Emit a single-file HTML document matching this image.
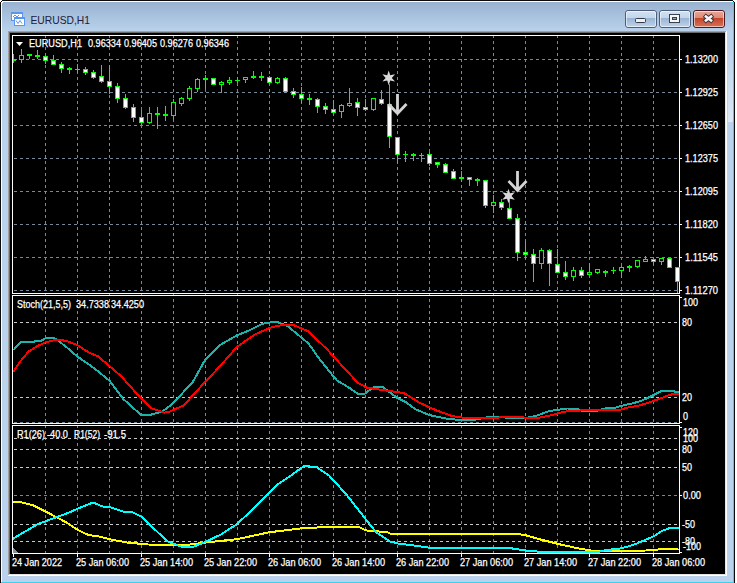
<!DOCTYPE html><html><head><meta charset="utf-8"><style>html,body{margin:0;padding:0;background:#f0f0f0;overflow:hidden;width:737px;height:583px}svg{display:block}text{font-family:"Liberation Sans",sans-serif}</style></head><body>
<svg width="737" height="583" viewBox="0 0 737 583">
<defs><linearGradient id="tg" x1="0" y1="0" x2="0" y2="1"><stop offset="0" stop-color="#98b2d0"/><stop offset="1" stop-color="#bad2eb"/></linearGradient><linearGradient id="rg" x1="0" y1="0" x2="0" y2="1"><stop offset="0" stop-color="#ffffff" stop-opacity="0"/><stop offset="1" stop-color="#ffffff" stop-opacity="0.5"/></linearGradient><linearGradient id="bg1" x1="0" y1="0" x2="0" y2="1"><stop offset="0" stop-color="#d4e2f2"/><stop offset="0.42" stop-color="#c3d6ec"/><stop offset="0.45" stop-color="#9ab3d1"/><stop offset="1" stop-color="#c0d6ee"/></linearGradient><linearGradient id="bg2" x1="0" y1="0" x2="0" y2="1"><stop offset="0" stop-color="#eaa898"/><stop offset="0.42" stop-color="#de8c78"/><stop offset="0.45" stop-color="#c0452a"/><stop offset="1" stop-color="#d8755c"/></linearGradient></defs>
<g shape-rendering="crispEdges">
<rect x="0" y="0" width="737" height="583" fill="#ffffff"/>
<rect x="0" y="0" width="735" height="583" fill="#0c0c0c"/>
<rect x="1" y="1" width="733" height="582" fill="#ffffff"/>
<rect x="2" y="2" width="731" height="580" fill="#bad2eb"/>
<rect x="733" y="2" width="1" height="581" fill="#3ad2ee"/>
<rect x="1" y="582" width="733" height="1" fill="#3ad2ee"/>
<rect x="2" y="2" width="731" height="29" fill="url(#tg)"/>
<rect x="8" y="31" width="719" height="545" fill="#ffffff"/>
<rect x="8" y="31" width="718" height="544" fill="#a0a0a0"/>
<rect x="9" y="32" width="717" height="543" fill="#e3e3e3"/>
<rect x="9" y="32" width="716" height="542" fill="#696969"/>
<rect x="10" y="33" width="715" height="541" fill="#000000"/>
</g>
<rect x="728" y="45" width="5" height="77" fill="url(#rg)" shape-rendering="crispEdges"/>
<g shape-rendering="crispEdges"><rect x="0" y="0" width="2" height="1" fill="#ffffff"/><rect x="0" y="1" width="1" height="1" fill="#ffffff"/><rect x="1" y="1" width="1" height="1" fill="#0c0c0c"/><rect x="2" y="2" width="1" height="1" fill="#ffffff"/><rect x="733" y="0" width="2" height="1" fill="#ffffff"/><rect x="734" y="1" width="1" height="1" fill="#ffffff"/><rect x="733" y="1" width="1" height="1" fill="#0c0c0c"/><rect x="732" y="2" width="1" height="1" fill="#3ad2ee"/></g>
<g shape-rendering="crispEdges"><rect x="11" y="12" width="12" height="9" fill="#5896f2"/><rect x="12" y="14" width="10" height="6" fill="#ffffff"/><rect x="14" y="17" width="11" height="9" fill="#5896f2"/><rect x="15" y="19" width="9" height="6" fill="#ffffff"/></g><polyline points="13,17 15,15 17,17 19,15" fill="none" stroke="#5896f2" stroke-width="1"/><polyline points="16,20.5 18,23.5 20,20.5 22,23.5" fill="none" stroke="#5896f2" stroke-width="1"/>
<text x="30.5" y="24" font-size="11.5" fill="#20203a" textLength="59.5" lengthAdjust="spacingAndGlyphs">EURUSD,H1</text>
<rect x="625.5" y="10.5" width="31" height="17" rx="2.5" fill="url(#bg1)" stroke="#4f5e78" stroke-width="1"/><rect x="626.5" y="11.5" width="29" height="15" rx="1.5" fill="none" stroke="rgba(255,255,255,0.55)" stroke-width="1"/>
<rect x="659.5" y="10.5" width="31" height="17" rx="2.5" fill="url(#bg1)" stroke="#4f5e78" stroke-width="1"/><rect x="660.5" y="11.5" width="29" height="15" rx="1.5" fill="none" stroke="rgba(255,255,255,0.55)" stroke-width="1"/>
<rect x="693.5" y="10.5" width="31" height="17" rx="2.5" fill="url(#bg2)" stroke="#4a1a24" stroke-width="1"/><rect x="694.5" y="11.5" width="29" height="15" rx="1.5" fill="none" stroke="rgba(255,255,255,0.55)" stroke-width="1"/>
<rect x="635.5" y="18.5" width="10" height="4" rx="1" fill="#f0f0f0" stroke="#333a48" stroke-width="1"/>
<g shape-rendering="crispEdges"><rect x="669" y="14" width="11" height="9" fill="#3a4250"/><rect x="670" y="15" width="9" height="7" fill="#f6f6f6"/><rect x="672" y="17" width="5" height="3" fill="#3a4250"/><rect x="673" y="18" width="3" height="1" fill="#8fa8c8"/></g>
<path d="M704.2 15.2 L712.8 21.8 M712.8 15.2 L704.2 21.8" stroke="#3a3440" stroke-width="4.6" stroke-linecap="butt"/>
<path d="M704.9 15.8 L712.1 21.2 M712.1 15.8 L704.9 21.2" stroke="#f8f8f8" stroke-width="2.6" stroke-linecap="butt"/>
<g stroke-width="1" stroke-dasharray="3 3" fill="none" shape-rendering="crispEdges"><line x1="45.5" y1="35" x2="45.5" y2="553" stroke="#778899"/><line x1="77.5" y1="35" x2="77.5" y2="553" stroke="#778899"/><line x1="109.5" y1="35" x2="109.5" y2="553" stroke="#778899"/><line x1="141.5" y1="35" x2="141.5" y2="553" stroke="#778899"/><line x1="173.5" y1="35" x2="173.5" y2="553" stroke="#778899"/><line x1="205.5" y1="35" x2="205.5" y2="553" stroke="#778899"/><line x1="237.5" y1="35" x2="237.5" y2="553" stroke="#778899"/><line x1="269.5" y1="35" x2="269.5" y2="553" stroke="#778899"/><line x1="301.5" y1="35" x2="301.5" y2="553" stroke="#778899"/><line x1="333.5" y1="35" x2="333.5" y2="553" stroke="#778899"/><line x1="365.5" y1="35" x2="365.5" y2="553" stroke="#778899"/><line x1="397.5" y1="35" x2="397.5" y2="553" stroke="#778899"/><line x1="429.5" y1="35" x2="429.5" y2="553" stroke="#778899"/><line x1="461.5" y1="35" x2="461.5" y2="553" stroke="#778899"/><line x1="493.5" y1="35" x2="493.5" y2="553" stroke="#778899"/><line x1="525.5" y1="35" x2="525.5" y2="553" stroke="#778899"/><line x1="557.5" y1="35" x2="557.5" y2="553" stroke="#778899"/><line x1="589.5" y1="35" x2="589.5" y2="553" stroke="#778899"/><line x1="621.5" y1="35" x2="621.5" y2="553" stroke="#778899"/><line x1="653.5" y1="35" x2="653.5" y2="553" stroke="#778899"/><line x1="14" y1="59.5" x2="679" y2="59.5" stroke="#778899"/><line x1="14" y1="92.5" x2="679" y2="92.5" stroke="#778899"/><line x1="14" y1="125.5" x2="679" y2="125.5" stroke="#778899"/><line x1="14" y1="158.5" x2="679" y2="158.5" stroke="#778899"/><line x1="14" y1="191.5" x2="679" y2="191.5" stroke="#778899"/><line x1="14" y1="224.5" x2="679" y2="224.5" stroke="#778899"/><line x1="14" y1="257.5" x2="679" y2="257.5" stroke="#778899"/><line x1="14" y1="290.5" x2="679" y2="290.5" stroke="#778899"/><line x1="14" y1="422.5" x2="679" y2="422.5" stroke="#778899"/><line x1="14" y1="495.5" x2="679" y2="495.5" stroke="#778899"/><line x1="14" y1="322.5" x2="679" y2="322.5" stroke="#c8c8c8"/><line x1="14" y1="397.5" x2="679" y2="397.5" stroke="#c8c8c8"/><line x1="14" y1="438.5" x2="679" y2="438.5" stroke="#c8c8c8"/><line x1="14" y1="449.5" x2="679" y2="449.5" stroke="#c8c8c8"/><line x1="14" y1="467.5" x2="679" y2="467.5" stroke="#c8c8c8"/><line x1="14" y1="524.5" x2="679" y2="524.5" stroke="#c8c8c8"/><line x1="14" y1="541.5" x2="679" y2="541.5" stroke="#c8c8c8"/></g>
<g fill="none" stroke="#ffffff" stroke-width="1" shape-rendering="crispEdges"><rect x="12.5" y="35.5" width="667" height="258"/><rect x="12.5" y="295.5" width="667" height="128"/><rect x="12.5" y="425.5" width="667" height="128"/><line x1="680" y1="59.5" x2="682" y2="59.5"/><line x1="680" y1="92.5" x2="682" y2="92.5"/><line x1="680" y1="125.5" x2="682" y2="125.5"/><line x1="680" y1="158.5" x2="682" y2="158.5"/><line x1="680" y1="191.5" x2="682" y2="191.5"/><line x1="680" y1="224.5" x2="682" y2="224.5"/><line x1="680" y1="257.5" x2="682" y2="257.5"/><line x1="680" y1="290.5" x2="682" y2="290.5"/><line x1="680" y1="297.5" x2="682" y2="297.5"/><line x1="680" y1="422.5" x2="682" y2="422.5"/><line x1="680" y1="427.5" x2="682" y2="427.5"/><line x1="680" y1="495.5" x2="682" y2="495.5"/><line x1="680" y1="552.5" x2="682" y2="552.5"/><line x1="13.5" y1="554" x2="13.5" y2="557"/><line x1="77.5" y1="554" x2="77.5" y2="557"/><line x1="141.5" y1="554" x2="141.5" y2="557"/><line x1="205.5" y1="554" x2="205.5" y2="557"/><line x1="269.5" y1="554" x2="269.5" y2="557"/><line x1="333.5" y1="554" x2="333.5" y2="557"/><line x1="397.5" y1="554" x2="397.5" y2="557"/><line x1="461.5" y1="554" x2="461.5" y2="557"/><line x1="525.5" y1="554" x2="525.5" y2="557"/><line x1="589.5" y1="554" x2="589.5" y2="557"/><line x1="653.5" y1="554" x2="653.5" y2="557"/></g>
<g shape-rendering="crispEdges"><rect x="13" y="54" width="1" height="9" fill="#00ff00"/><rect x="13" y="59" width="3" height="2" fill="#00ff00"/><rect x="21" y="49" width="1" height="14" fill="#00ff00"/><rect x="19" y="55" width="5" height="5" fill="#00ff00"/><rect x="20" y="56" width="3" height="3" fill="#000"/><rect x="29" y="54" width="1" height="5" fill="#00ff00"/><rect x="27" y="54" width="5" height="2" fill="#00ff00"/><rect x="37" y="50" width="1" height="9" fill="#00ff00"/><rect x="35" y="55" width="5" height="2" fill="#00ff00"/><rect x="45" y="55" width="1" height="9" fill="#00ff00"/><rect x="43" y="56" width="5" height="5" fill="#00ff00"/><rect x="44" y="57" width="3" height="3" fill="#fff"/><rect x="53" y="55" width="1" height="10" fill="#00ff00"/><rect x="51" y="60" width="5" height="5" fill="#00ff00"/><rect x="52" y="61" width="3" height="3" fill="#fff"/><rect x="61" y="62" width="1" height="11" fill="#00ff00"/><rect x="59" y="64" width="5" height="5" fill="#00ff00"/><rect x="60" y="65" width="3" height="3" fill="#fff"/><rect x="69" y="67" width="1" height="7" fill="#00ff00"/><rect x="67" y="68" width="5" height="2" fill="#00ff00"/><rect x="77" y="64" width="1" height="9" fill="#00ff00"/><rect x="75" y="69" width="5" height="1" fill="#00ff00"/><rect x="85" y="67" width="1" height="8" fill="#00ff00"/><rect x="83" y="69" width="5" height="4" fill="#00ff00"/><rect x="84" y="70" width="3" height="2" fill="#fff"/><rect x="93" y="70" width="1" height="9" fill="#00ff00"/><rect x="91" y="72" width="5" height="6" fill="#00ff00"/><rect x="92" y="73" width="3" height="4" fill="#fff"/><rect x="101" y="65" width="1" height="18" fill="#00ff00"/><rect x="99" y="76" width="5" height="6" fill="#00ff00"/><rect x="100" y="77" width="3" height="4" fill="#fff"/><rect x="109" y="65" width="1" height="29" fill="#00ff00"/><rect x="107" y="81" width="5" height="6" fill="#00ff00"/><rect x="108" y="82" width="3" height="4" fill="#fff"/><rect x="117" y="83" width="1" height="20" fill="#00ff00"/><rect x="115" y="86" width="5" height="13" fill="#00ff00"/><rect x="116" y="87" width="3" height="11" fill="#fff"/><rect x="125" y="94" width="1" height="15" fill="#00ff00"/><rect x="123" y="98" width="5" height="10" fill="#00ff00"/><rect x="124" y="99" width="3" height="8" fill="#fff"/><rect x="133" y="104" width="1" height="18" fill="#00ff00"/><rect x="131" y="107" width="5" height="11" fill="#00ff00"/><rect x="132" y="108" width="3" height="9" fill="#fff"/><rect x="141" y="110" width="1" height="15" fill="#00ff00"/><rect x="139" y="117" width="5" height="6" fill="#00ff00"/><rect x="140" y="118" width="3" height="4" fill="#fff"/><rect x="149" y="107" width="1" height="17" fill="#00ff00"/><rect x="147" y="113" width="5" height="10" fill="#00ff00"/><rect x="148" y="114" width="3" height="8" fill="#000"/><rect x="157" y="107" width="1" height="22" fill="#00ff00"/><rect x="155" y="113" width="5" height="2" fill="#00ff00"/><rect x="165" y="106" width="1" height="15" fill="#00ff00"/><rect x="163" y="114" width="5" height="2" fill="#00ff00"/><rect x="173" y="99" width="1" height="20" fill="#00ff00"/><rect x="171" y="102" width="5" height="14" fill="#00ff00"/><rect x="172" y="103" width="3" height="12" fill="#000"/><rect x="181" y="97" width="1" height="9" fill="#00ff00"/><rect x="179" y="98" width="5" height="6" fill="#00ff00"/><rect x="180" y="99" width="3" height="4" fill="#000"/><rect x="189" y="86" width="1" height="15" fill="#00ff00"/><rect x="187" y="88" width="5" height="11" fill="#00ff00"/><rect x="188" y="89" width="3" height="9" fill="#000"/><rect x="197" y="78" width="1" height="14" fill="#00ff00"/><rect x="195" y="79" width="5" height="10" fill="#00ff00"/><rect x="196" y="80" width="3" height="8" fill="#000"/><rect x="205" y="75" width="1" height="14" fill="#00ff00"/><rect x="203" y="78" width="5" height="2" fill="#00ff00"/><rect x="213" y="78" width="1" height="7" fill="#00ff00"/><rect x="211" y="78" width="5" height="7" fill="#00ff00"/><rect x="212" y="79" width="3" height="5" fill="#fff"/><rect x="221" y="81" width="1" height="12" fill="#00ff00"/><rect x="219" y="82" width="5" height="3" fill="#00ff00"/><rect x="220" y="83" width="3" height="1" fill="#000"/><rect x="229" y="77" width="1" height="8" fill="#00ff00"/><rect x="227" y="80" width="5" height="3" fill="#00ff00"/><rect x="228" y="81" width="3" height="1" fill="#000"/><rect x="237" y="77" width="1" height="6" fill="#00ff00"/><rect x="235" y="80" width="5" height="1" fill="#00ff00"/><rect x="245" y="77" width="1" height="6" fill="#00ff00"/><rect x="243" y="77" width="5" height="3" fill="#00ff00"/><rect x="244" y="78" width="3" height="1" fill="#000"/><rect x="253" y="71" width="1" height="8" fill="#00ff00"/><rect x="251" y="76" width="5" height="2" fill="#00ff00"/><rect x="261" y="72" width="1" height="9" fill="#00ff00"/><rect x="259" y="76" width="5" height="2" fill="#00ff00"/><rect x="269" y="76" width="1" height="8" fill="#00ff00"/><rect x="267" y="77" width="5" height="6" fill="#00ff00"/><rect x="268" y="78" width="3" height="4" fill="#fff"/><rect x="277" y="77" width="1" height="7" fill="#00ff00"/><rect x="275" y="78" width="5" height="5" fill="#00ff00"/><rect x="276" y="79" width="3" height="3" fill="#000"/><rect x="285" y="77" width="1" height="16" fill="#00ff00"/><rect x="283" y="78" width="5" height="14" fill="#00ff00"/><rect x="284" y="79" width="3" height="12" fill="#fff"/><rect x="293" y="88" width="1" height="10" fill="#00ff00"/><rect x="291" y="91" width="5" height="4" fill="#00ff00"/><rect x="292" y="92" width="3" height="2" fill="#fff"/><rect x="301" y="87" width="1" height="16" fill="#00ff00"/><rect x="299" y="94" width="5" height="5" fill="#00ff00"/><rect x="300" y="95" width="3" height="3" fill="#fff"/><rect x="309" y="94" width="1" height="11" fill="#00ff00"/><rect x="307" y="98" width="5" height="2" fill="#00ff00"/><rect x="317" y="98" width="1" height="15" fill="#00ff00"/><rect x="315" y="99" width="5" height="8" fill="#00ff00"/><rect x="316" y="100" width="3" height="6" fill="#fff"/><rect x="325" y="103" width="1" height="11" fill="#00ff00"/><rect x="323" y="106" width="5" height="4" fill="#00ff00"/><rect x="324" y="107" width="3" height="2" fill="#fff"/><rect x="333" y="100" width="1" height="14" fill="#00ff00"/><rect x="331" y="109" width="5" height="4" fill="#00ff00"/><rect x="332" y="110" width="3" height="2" fill="#fff"/><rect x="341" y="104" width="1" height="14" fill="#00ff00"/><rect x="339" y="105" width="5" height="7" fill="#00ff00"/><rect x="340" y="106" width="3" height="5" fill="#000"/><rect x="349" y="88" width="1" height="19" fill="#00ff00"/><rect x="347" y="103" width="5" height="3" fill="#00ff00"/><rect x="348" y="104" width="3" height="1" fill="#000"/><rect x="357" y="98" width="1" height="18" fill="#00ff00"/><rect x="355" y="102" width="5" height="6" fill="#00ff00"/><rect x="356" y="103" width="3" height="4" fill="#fff"/><rect x="365" y="99" width="1" height="12" fill="#00ff00"/><rect x="363" y="107" width="5" height="3" fill="#00ff00"/><rect x="364" y="108" width="3" height="1" fill="#fff"/><rect x="373" y="98" width="1" height="13" fill="#00ff00"/><rect x="371" y="98" width="5" height="12" fill="#00ff00"/><rect x="372" y="99" width="3" height="10" fill="#000"/><rect x="381" y="90" width="1" height="15" fill="#00ff00"/><rect x="379" y="99" width="5" height="5" fill="#00ff00"/><rect x="380" y="100" width="3" height="3" fill="#fff"/><rect x="389" y="84" width="1" height="64" fill="#00ff00"/><rect x="387" y="104" width="5" height="33" fill="#00ff00"/><rect x="388" y="105" width="3" height="31" fill="#fff"/><rect x="397" y="137" width="1" height="26" fill="#00ff00"/><rect x="395" y="137" width="5" height="18" fill="#00ff00"/><rect x="396" y="138" width="3" height="16" fill="#fff"/><rect x="405" y="151" width="1" height="11" fill="#00ff00"/><rect x="403" y="154" width="5" height="1" fill="#00ff00"/><rect x="413" y="153" width="1" height="8" fill="#00ff00"/><rect x="411" y="154" width="5" height="2" fill="#00ff00"/><rect x="421" y="153" width="1" height="9" fill="#00ff00"/><rect x="419" y="155" width="5" height="1" fill="#00ff00"/><rect x="429" y="152" width="1" height="14" fill="#00ff00"/><rect x="427" y="154" width="5" height="10" fill="#00ff00"/><rect x="428" y="155" width="3" height="8" fill="#fff"/><rect x="437" y="162" width="1" height="6" fill="#00ff00"/><rect x="435" y="162" width="5" height="3" fill="#00ff00"/><rect x="436" y="163" width="3" height="1" fill="#fff"/><rect x="445" y="163" width="1" height="10" fill="#00ff00"/><rect x="443" y="164" width="5" height="9" fill="#00ff00"/><rect x="444" y="165" width="3" height="7" fill="#fff"/><rect x="453" y="169" width="1" height="10" fill="#00ff00"/><rect x="451" y="171" width="5" height="8" fill="#00ff00"/><rect x="452" y="172" width="3" height="6" fill="#fff"/><rect x="461" y="171" width="1" height="11" fill="#00ff00"/><rect x="459" y="177" width="5" height="2" fill="#00ff00"/><rect x="469" y="177" width="1" height="9" fill="#00ff00"/><rect x="467" y="177" width="5" height="3" fill="#00ff00"/><rect x="468" y="178" width="3" height="1" fill="#fff"/><rect x="477" y="178" width="1" height="8" fill="#00ff00"/><rect x="475" y="179" width="5" height="2" fill="#00ff00"/><rect x="485" y="180" width="1" height="28" fill="#00ff00"/><rect x="483" y="180" width="5" height="26" fill="#00ff00"/><rect x="484" y="181" width="3" height="24" fill="#fff"/><rect x="493" y="195" width="1" height="18" fill="#00ff00"/><rect x="491" y="202" width="5" height="4" fill="#00ff00"/><rect x="492" y="203" width="3" height="2" fill="#000"/><rect x="501" y="199" width="1" height="11" fill="#00ff00"/><rect x="499" y="202" width="5" height="6" fill="#00ff00"/><rect x="500" y="203" width="3" height="4" fill="#fff"/><rect x="509" y="200" width="1" height="19" fill="#00ff00"/><rect x="507" y="208" width="5" height="11" fill="#00ff00"/><rect x="508" y="209" width="3" height="9" fill="#fff"/><rect x="517" y="214" width="1" height="47" fill="#00ff00"/><rect x="515" y="218" width="5" height="35" fill="#00ff00"/><rect x="516" y="219" width="3" height="33" fill="#fff"/><rect x="525" y="241" width="1" height="18" fill="#00ff00"/><rect x="523" y="252" width="5" height="3" fill="#00ff00"/><rect x="524" y="253" width="3" height="1" fill="#fff"/><rect x="533" y="249" width="1" height="33" fill="#00ff00"/><rect x="531" y="254" width="5" height="10" fill="#00ff00"/><rect x="532" y="255" width="3" height="8" fill="#fff"/><rect x="541" y="248" width="1" height="21" fill="#00ff00"/><rect x="539" y="250" width="5" height="14" fill="#00ff00"/><rect x="540" y="251" width="3" height="12" fill="#000"/><rect x="549" y="249" width="1" height="37" fill="#00ff00"/><rect x="547" y="250" width="5" height="14" fill="#00ff00"/><rect x="548" y="251" width="3" height="12" fill="#fff"/><rect x="557" y="249" width="1" height="24" fill="#00ff00"/><rect x="555" y="264" width="5" height="9" fill="#00ff00"/><rect x="556" y="265" width="3" height="7" fill="#fff"/><rect x="565" y="261" width="1" height="19" fill="#00ff00"/><rect x="563" y="272" width="5" height="5" fill="#00ff00"/><rect x="564" y="273" width="3" height="3" fill="#fff"/><rect x="573" y="267" width="1" height="14" fill="#00ff00"/><rect x="571" y="270" width="5" height="7" fill="#00ff00"/><rect x="572" y="271" width="3" height="5" fill="#000"/><rect x="581" y="267" width="1" height="11" fill="#00ff00"/><rect x="579" y="270" width="5" height="6" fill="#00ff00"/><rect x="580" y="271" width="3" height="4" fill="#fff"/><rect x="589" y="263" width="1" height="13" fill="#00ff00"/><rect x="587" y="272" width="5" height="3" fill="#00ff00"/><rect x="588" y="273" width="3" height="1" fill="#000"/><rect x="597" y="269" width="1" height="5" fill="#00ff00"/><rect x="595" y="269" width="5" height="4" fill="#00ff00"/><rect x="596" y="270" width="3" height="2" fill="#000"/><rect x="605" y="270" width="1" height="7" fill="#00ff00"/><rect x="603" y="271" width="5" height="2" fill="#00ff00"/><rect x="613" y="267" width="1" height="7" fill="#00ff00"/><rect x="611" y="270" width="5" height="1" fill="#00ff00"/><rect x="621" y="266" width="1" height="12" fill="#00ff00"/><rect x="619" y="267" width="5" height="4" fill="#00ff00"/><rect x="620" y="268" width="3" height="2" fill="#000"/><rect x="629" y="265" width="1" height="7" fill="#00ff00"/><rect x="627" y="266" width="5" height="2" fill="#00ff00"/><rect x="637" y="260" width="1" height="8" fill="#00ff00"/><rect x="635" y="260" width="5" height="7" fill="#00ff00"/><rect x="636" y="261" width="3" height="5" fill="#000"/><rect x="645" y="256" width="1" height="6" fill="#00ff00"/><rect x="643" y="259" width="5" height="3" fill="#00ff00"/><rect x="644" y="260" width="3" height="1" fill="#000"/><rect x="653" y="258" width="1" height="7" fill="#00ff00"/><rect x="651" y="259" width="5" height="3" fill="#00ff00"/><rect x="652" y="260" width="3" height="1" fill="#fff"/><rect x="661" y="258" width="1" height="7" fill="#00ff00"/><rect x="659" y="258" width="5" height="4" fill="#00ff00"/><rect x="660" y="259" width="3" height="2" fill="#000"/><rect x="669" y="258" width="1" height="10" fill="#00ff00"/><rect x="667" y="258" width="5" height="10" fill="#00ff00"/><rect x="668" y="259" width="3" height="8" fill="#fff"/><rect x="677" y="267" width="1" height="26" fill="#00ff00"/><rect x="675" y="267" width="5" height="15" fill="#00ff00"/><rect x="676" y="268" width="3" height="13" fill="#fff"/></g>
<polyline points="13.3,350.2 21.4,341.8 30.1,341.8 40.4,341.1 45.8,338.2 53.4,337.8 57.8,340.2 68.6,348.9 77.3,356.5 90.0,365.2 97.7,371.1 109.2,380.4 123.0,398.8 141.5,415.4 148.4,415.4 162.2,411.5 170.0,405.7 181.5,394.2 193.1,381.5 204.6,360.7 220.7,344.6 236.9,335.4 248.4,330.8 262.3,323.8 276.1,321.5 287.6,326.1 308.4,343.4 319.9,359.6 333.8,376.9 336.9,380.4 348.5,387.3 357.7,393.7 364.6,393.7 373.8,387.3 383.1,387.3 396.9,397.7 406.1,402.3 415.4,409.2 429.2,415.0 445.3,418.4 459.2,420.0 473.0,420.0 486.9,417.3 500.3,416.7 510.6,418.3 523.5,418.3 535.1,416.2 549.3,411.0 567.4,408.5 577.7,409.2 582.8,411.0 595.7,411.0 605.4,408.4 614.1,408.0 621.7,405.8 632.6,403.3 640.2,401.2 647.8,397.9 654.3,394.7 661.9,390.9 672.7,390.9 676.0,392.0 678.5,392.0" fill="none" stroke="#20b2aa" stroke-width="2" stroke-linejoin="round" shape-rendering="crispEdges"/>
<polyline points="13.3,371.9 19.8,361.9 28.5,351.6 37.1,346.2 45.8,342.2 55.6,340.0 61.0,340.0 67.5,341.3 77.3,345.1 90.0,353.2 97.7,356.1 120.7,375.7 139.2,396.5 150.7,408.0 164.6,412.6 170.0,411.5 183.8,405.3 202.3,385.0 220.7,365.4 236.9,346.9 255.4,334.2 271.5,327.3 285.3,324.5 294.6,325.5 308.4,331.4 326.9,349.2 343.8,367.7 357.7,382.7 366.9,387.7 387.7,390.7 403.8,393.0 420.0,403.0 436.1,410.3 452.3,416.1 468.4,418.4 486.9,418.4 510.6,416.7 536.4,418.3 549.3,415.7 564.8,411.6 582.8,410.3 600.0,409.5 621.2,409.5 627.1,407.7 638.0,405.8 646.7,403.3 654.3,400.6 661.9,397.9 667.3,395.7 674.9,393.6 678.5,393.6" fill="none" stroke="#ff0000" stroke-width="2" stroke-linejoin="round" shape-rendering="crispEdges"/>
<polyline points="13.0,501.8 21.5,502.3 33.1,505.3 46.9,512.2 65.4,521.9 79.2,530.7 88.4,535.0 97.7,536.2 111.5,539.6 127.6,542.6 148.4,544.5 166.9,545.4 183.8,545.4 204.6,542.6 236.9,539.2 269.2,532.3 301.5,528.3 336.9,526.5 357.7,526.5 365.8,530.4 387.7,532.3 391.1,533.9 517.1,533.9 526.1,535.4 541.6,539.8 562.2,544.9 580.3,548.8 593.1,550.8 620.5,551.0 646.2,550.5 662.0,549.2 678.5,548.6" fill="none" stroke="#ffff00" stroke-width="2" stroke-linejoin="round" shape-rendering="crispEdges"/>
<polyline points="13.0,538.7 23.8,532.3 37.7,524.2 56.1,517.3 70.0,512.2 79.2,508.0 91.9,503.0 95.4,503.4 102.3,506.4 111.5,507.6 123.0,511.5 132.3,512.2 142.6,517.3 153.0,527.7 166.9,541.0 181.5,546.8 193.1,546.8 204.6,542.2 220.7,534.6 236.9,524.2 257.7,504.6 278.4,483.8 292.3,474.6 303.8,466.1 316.5,467.0 329.2,475.7 346.1,494.2 366.9,520.7 376.1,532.3 390.0,541.5 399.2,543.8 410.7,545.0 429.2,547.7 509.3,548.0 526.1,550.6 541.6,551.9 597.3,552.2 606.5,549.8 616.9,549.2 626.6,547.0 636.4,543.7 645.0,540.0 654.7,535.8 662.0,530.9 670.6,527.8 678.5,527.8" fill="none" stroke="#00ffff" stroke-width="2" stroke-linejoin="round" shape-rendering="crispEdges"/>
<polygon points="388.70,70.60 387.17,75.24 382.38,74.25 385.63,77.90 382.38,81.55 387.17,80.56 388.70,85.20 390.23,80.56 395.02,81.55 391.77,77.90 395.02,74.25 390.23,75.24" fill="#d8d8d8"/>
<polygon points="508.50,188.70 506.97,193.34 502.18,192.35 505.43,196.00 502.18,199.65 506.97,198.66 508.50,203.30 510.03,198.66 514.82,199.65 511.57,196.00 514.82,192.35 510.03,193.34" fill="#d8d8d8"/>
<path d="M397.5 94.0 V113.0 M388.5 104.0 L397.5 113.5 L406.5 104.0" fill="none" stroke="#d4d4d4" stroke-width="2.8" stroke-linejoin="miter" stroke-linecap="butt"/>
<path d="M517.5 171.0 V190.0 M508.5 181.0 L517.5 190.5 L526.5 181.0" fill="none" stroke="#d4d4d4" stroke-width="2.8" stroke-linejoin="miter" stroke-linecap="butt"/>
<path d="M13 548 L13 553 L18 553 Z" fill="#8090a0" shape-rendering="crispEdges"/>
<path d="M16 42 L23 42 L19.5 46 Z" fill="#ffffff"/>
<text x="29.0" y="47.0" font-size="10" fill="#ffffff" stroke="#ffffff" stroke-width="0.25" textLength="53.0" lengthAdjust="spacingAndGlyphs">EURUSD,H1</text>
<text x="88.0" y="47.0" font-size="10" fill="#ffffff" stroke="#ffffff" stroke-width="0.25" textLength="33.0" lengthAdjust="spacingAndGlyphs">0.96334</text>
<text x="124.0" y="47.0" font-size="10" fill="#ffffff" stroke="#ffffff" stroke-width="0.25" textLength="33.0" lengthAdjust="spacingAndGlyphs">0.96405</text>
<text x="160.0" y="47.0" font-size="10" fill="#ffffff" stroke="#ffffff" stroke-width="0.25" textLength="33.0" lengthAdjust="spacingAndGlyphs">0.96276</text>
<text x="196.0" y="47.0" font-size="10" fill="#ffffff" stroke="#ffffff" stroke-width="0.25" textLength="33.0" lengthAdjust="spacingAndGlyphs">0.96346</text>
<text x="685.0" y="63.0" font-size="10" fill="#ffffff" stroke="#ffffff" stroke-width="0.25" textLength="33.0" lengthAdjust="spacingAndGlyphs">1.13200</text>
<text x="685.0" y="96.0" font-size="10" fill="#ffffff" stroke="#ffffff" stroke-width="0.25" textLength="33.0" lengthAdjust="spacingAndGlyphs">1.12925</text>
<text x="685.0" y="129.0" font-size="10" fill="#ffffff" stroke="#ffffff" stroke-width="0.25" textLength="33.0" lengthAdjust="spacingAndGlyphs">1.12650</text>
<text x="685.0" y="162.0" font-size="10" fill="#ffffff" stroke="#ffffff" stroke-width="0.25" textLength="33.0" lengthAdjust="spacingAndGlyphs">1.12375</text>
<text x="685.0" y="195.0" font-size="10" fill="#ffffff" stroke="#ffffff" stroke-width="0.25" textLength="33.0" lengthAdjust="spacingAndGlyphs">1.12095</text>
<text x="685.0" y="228.0" font-size="10" fill="#ffffff" stroke="#ffffff" stroke-width="0.25" textLength="33.0" lengthAdjust="spacingAndGlyphs">1.11820</text>
<text x="685.0" y="261.0" font-size="10" fill="#ffffff" stroke="#ffffff" stroke-width="0.25" textLength="33.0" lengthAdjust="spacingAndGlyphs">1.11545</text>
<text x="685.0" y="294.0" font-size="10" fill="#ffffff" stroke="#ffffff" stroke-width="0.25" textLength="33.0" lengthAdjust="spacingAndGlyphs">1.11270</text>
<text x="683.0" y="306.0" font-size="10" fill="#ffffff" stroke="#ffffff" stroke-width="0.25" textLength="15.0" lengthAdjust="spacingAndGlyphs">100</text>
<text x="682.0" y="326.0" font-size="10" fill="#ffffff" stroke="#ffffff" stroke-width="0.25" textLength="10.0" lengthAdjust="spacingAndGlyphs">80</text>
<text x="682.0" y="401.0" font-size="10" fill="#ffffff" stroke="#ffffff" stroke-width="0.25" textLength="10.0" lengthAdjust="spacingAndGlyphs">20</text>
<text x="683.0" y="420.0" font-size="10" fill="#ffffff" stroke="#ffffff" stroke-width="0.25" textLength="5.0" lengthAdjust="spacingAndGlyphs">0</text>
<text x="683.0" y="436.0" font-size="10" fill="#ffffff" stroke="#ffffff" stroke-width="0.25" textLength="15.0" lengthAdjust="spacingAndGlyphs">120</text>
<text x="683.0" y="442.0" font-size="10" fill="#ffffff" stroke="#ffffff" stroke-width="0.25" textLength="15.0" lengthAdjust="spacingAndGlyphs">100</text>
<text x="682.0" y="453.0" font-size="10" fill="#ffffff" stroke="#ffffff" stroke-width="0.25" textLength="10.0" lengthAdjust="spacingAndGlyphs">80</text>
<text x="682.0" y="471.0" font-size="10" fill="#ffffff" stroke="#ffffff" stroke-width="0.25" textLength="10.0" lengthAdjust="spacingAndGlyphs">50</text>
<text x="683.0" y="499.0" font-size="10" fill="#ffffff" stroke="#ffffff" stroke-width="0.25" textLength="18.0" lengthAdjust="spacingAndGlyphs">0.00</text>
<text x="682.0" y="528.0" font-size="10" fill="#ffffff" stroke="#ffffff" stroke-width="0.25" textLength="13.0" lengthAdjust="spacingAndGlyphs">-50</text>
<text x="682.0" y="545.0" font-size="10" fill="#ffffff" stroke="#ffffff" stroke-width="0.25" textLength="13.0" lengthAdjust="spacingAndGlyphs">-80</text>
<text x="683.0" y="550.0" font-size="10" fill="#ffffff" stroke="#ffffff" stroke-width="0.25" textLength="18.0" lengthAdjust="spacingAndGlyphs">-100</text>
<text x="17.0" y="308.0" font-size="10" fill="#ffffff" stroke="#ffffff" stroke-width="0.25" textLength="54.0" lengthAdjust="spacingAndGlyphs">Stoch(21,5,5)</text>
<text x="76.0" y="308.0" font-size="10" fill="#ffffff" stroke="#ffffff" stroke-width="0.25" textLength="33.0" lengthAdjust="spacingAndGlyphs">34.7338</text>
<text x="111.0" y="308.0" font-size="10" fill="#ffffff" stroke="#ffffff" stroke-width="0.25" textLength="33.0" lengthAdjust="spacingAndGlyphs">34.4250</text>
<text x="17.0" y="438.0" font-size="10" fill="#ffffff" stroke="#ffffff" stroke-width="0.25" textLength="28.0" lengthAdjust="spacingAndGlyphs">R1(26)</text>
<text x="47.0" y="438.0" font-size="10" fill="#ffffff" stroke="#ffffff" stroke-width="0.25" textLength="21.0" lengthAdjust="spacingAndGlyphs">-40.0</text>
<text x="74.0" y="438.0" font-size="10" fill="#ffffff" stroke="#ffffff" stroke-width="0.25" textLength="26.0" lengthAdjust="spacingAndGlyphs">R1(52)</text>
<text x="104.0" y="438.0" font-size="10" fill="#ffffff" stroke="#ffffff" stroke-width="0.25" textLength="22.0" lengthAdjust="spacingAndGlyphs">-91.5</text>
<text x="12.0" y="566.0" font-size="10" fill="#ffffff" stroke="#ffffff" stroke-width="0.25" textLength="50.0" lengthAdjust="spacingAndGlyphs">24 Jan 2022</text>
<text x="76.0" y="566.0" font-size="10" fill="#ffffff" stroke="#ffffff" stroke-width="0.25" textLength="53.0" lengthAdjust="spacingAndGlyphs">25 Jan 06:00</text>
<text x="140.0" y="566.0" font-size="10" fill="#ffffff" stroke="#ffffff" stroke-width="0.25" textLength="53.0" lengthAdjust="spacingAndGlyphs">25 Jan 14:00</text>
<text x="204.0" y="566.0" font-size="10" fill="#ffffff" stroke="#ffffff" stroke-width="0.25" textLength="53.0" lengthAdjust="spacingAndGlyphs">25 Jan 22:00</text>
<text x="268.0" y="566.0" font-size="10" fill="#ffffff" stroke="#ffffff" stroke-width="0.25" textLength="53.0" lengthAdjust="spacingAndGlyphs">26 Jan 06:00</text>
<text x="332.0" y="566.0" font-size="10" fill="#ffffff" stroke="#ffffff" stroke-width="0.25" textLength="53.0" lengthAdjust="spacingAndGlyphs">26 Jan 14:00</text>
<text x="396.0" y="566.0" font-size="10" fill="#ffffff" stroke="#ffffff" stroke-width="0.25" textLength="53.0" lengthAdjust="spacingAndGlyphs">26 Jan 22:00</text>
<text x="460.0" y="566.0" font-size="10" fill="#ffffff" stroke="#ffffff" stroke-width="0.25" textLength="53.0" lengthAdjust="spacingAndGlyphs">27 Jan 06:00</text>
<text x="524.0" y="566.0" font-size="10" fill="#ffffff" stroke="#ffffff" stroke-width="0.25" textLength="53.0" lengthAdjust="spacingAndGlyphs">27 Jan 14:00</text>
<text x="588.0" y="566.0" font-size="10" fill="#ffffff" stroke="#ffffff" stroke-width="0.25" textLength="53.0" lengthAdjust="spacingAndGlyphs">27 Jan 22:00</text>
<text x="652.0" y="566.0" font-size="10" fill="#ffffff" stroke="#ffffff" stroke-width="0.25" textLength="53.0" lengthAdjust="spacingAndGlyphs">28 Jan 06:00</text>
</svg></body></html>
